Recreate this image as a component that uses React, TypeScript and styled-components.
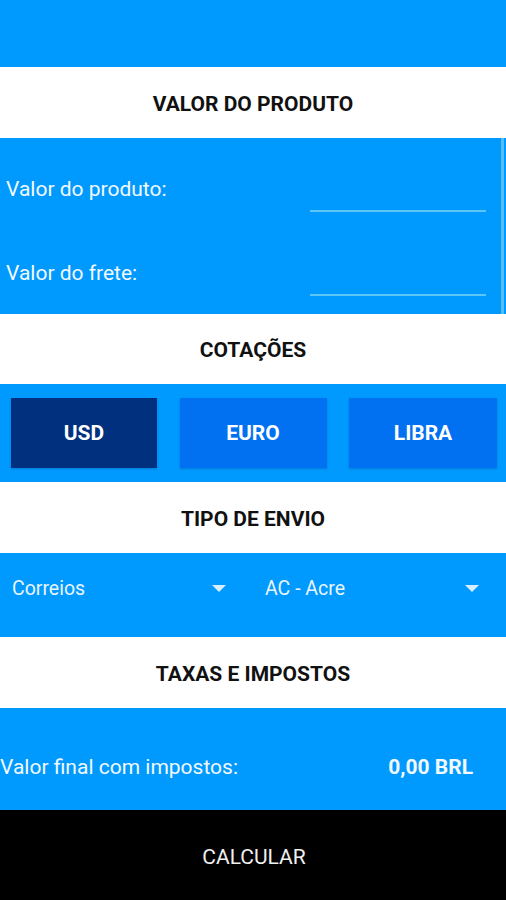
import React from "react";
import styled, { createGlobalStyle } from "styled-components";

const BLUE = "#0099fe";

const Global = createGlobalStyle`
  html, body { margin: 0; padding: 0; background: #ffffff; }
  body { font-family: Roboto, "Liberation Sans", Arial, sans-serif; }
  * { box-sizing: border-box; }
`;

const Screen = styled.div`
  width: 506px;
  height: 900px;
  display: flex;
  flex-direction: column;
  overflow: hidden;
  background: #ffffff;
`;

const TopBar = styled.div`
  height: 67px;
  background: ${BLUE};
  flex: none;
`;

const SectionHeader = styled.div<{ $h?: number }>`
  height: ${(p) => p.$h ?? 71}px;
  flex: none;
  background: #ffffff;
  display: flex;
  align-items: center;
  justify-content: center;
  padding-top: 2px;
`;

const SectionTitle = styled.h2`
  margin: 0;
  font-family: Roboto, "Liberation Sans", Arial, sans-serif;
  font-weight: 700;
  font-size: 21px;
  line-height: 24px;
  color: #111111;
  letter-spacing: 0;
`;

const Panel = styled.div<{ $h: number }>`
  position: relative;
  height: ${(p) => p.$h}px;
  flex: none;
  background: ${BLUE};
`;

const ProductPanel = styled(Panel)`
  padding: 4px 20px 4px 6px;
  display: flex;
  flex-direction: column;
`;

const FieldRow = styled.div`
  height: 84px;
  display: flex;
  align-items: flex-end;
  justify-content: space-between;
  padding-bottom: 14px;
`;

const FieldLabel = styled.label`
  font-size: 21px;
  line-height: 24px;
  color: #f2f9ff;
  margin-bottom: 11px;
`;

const FieldInput = styled.input`
  width: 176px;
  height: 36px;
  border: none;
  border-bottom: 2px solid #5cc6f4;
  background: transparent;
  outline: none;
  color: #ffffff;
  font-size: 20px;
  font-family: inherit;
  padding: 0 4px;
`;

const ScrollThumb = styled.div`
  position: absolute;
  top: 0;
  bottom: 0;
  right: 2px;
  width: 3px;
  background: #56bdf6;
`;

const CurrencyPanel = styled(Panel)`
  display: grid;
  grid-template-columns: 146px 147px 148px;
  column-gap: 0;
  justify-content: space-between;
  padding: 14px 9px 14px 11px;
`;

const CurrencyButton = styled.button<{ $active?: boolean }>`
  height: 70px;
  border: none;
  border-radius: 0;
  background: ${(p) => (p.$active ? "#01307f" : "#0171f2")};
  color: #ffffff;
  font-family: Roboto, "Liberation Sans", Arial, sans-serif;
  font-weight: 700;
  font-size: 21px;
  letter-spacing: 0;
  cursor: pointer;
  box-shadow: 0 1px 2px rgba(0, 40, 100, 0.25);
`;

const SelectPanel = styled(Panel)`
  display: grid;
  grid-template-columns: 253px 253px;
  align-items: start;
  padding-top: 24px;
`;

const SelectBox = styled.div`
  height: 24px;
  display: flex;
  align-items: center;
  justify-content: space-between;
  padding: 0 27px 0 12px;
`;

const SelectText = styled.span`
  font-size: 19.5px;
  line-height: 24px;
  color: #e9f5ff;
`;

const Caret = styled.span`
  width: 0;
  height: 0;
  border-left: 7px solid transparent;
  border-right: 7px solid transparent;
  border-top: 7px solid #d6eeff;
  margin-top: -2px;
`;

const ResultPanel = styled(Panel)`
  display: flex;
  align-items: flex-start;
  justify-content: space-between;
  padding: 47px 33px 0 0;
`;

const ResultLabel = styled.span`
  font-size: 21px;
  line-height: 24px;
  color: #f2f9ff;
`;

const ResultValue = styled.span`
  font-size: 21px;
  line-height: 24px;
  font-weight: 700;
  color: #f2f9ff;
`;

const CalcButton = styled.button`
  flex: 1;
  width: 100%;
  border: none;
  background: #000000;
  color: #f0f0f0;
  font-family: Roboto, "Liberation Sans", Arial, sans-serif;
  font-size: 21px;
  font-weight: 400;
  padding: 3px 0 0 2px;
  cursor: pointer;
`;

function Select({ value }: { value: string }) {
  return (
    <SelectBox>
      <SelectText>{value}</SelectText>
      <Caret />
    </SelectBox>
  );
}

export default function App() {
  return (
    <Screen>
      <Global />
      <TopBar />
      <SectionHeader>
        <SectionTitle>VALOR DO PRODUTO</SectionTitle>
      </SectionHeader>
      <ProductPanel $h={176}>
        <FieldRow>
          <FieldLabel>Valor do produto:</FieldLabel>
          <FieldInput />
        </FieldRow>
        <FieldRow>
          <FieldLabel>Valor do frete:</FieldLabel>
          <FieldInput />
        </FieldRow>
        <ScrollThumb />
      </ProductPanel>
      <SectionHeader $h={70}>
        <SectionTitle>COTAÇÕES</SectionTitle>
      </SectionHeader>
      <CurrencyPanel $h={98}>
        <CurrencyButton $active>USD</CurrencyButton>
        <CurrencyButton>EURO</CurrencyButton>
        <CurrencyButton>LIBRA</CurrencyButton>
      </CurrencyPanel>
      <SectionHeader>
        <SectionTitle>TIPO DE ENVIO</SectionTitle>
      </SectionHeader>
      <SelectPanel $h={84}>
        <Select value="Correios" />
        <Select value="AC - Acre" />
      </SelectPanel>
      <SectionHeader>
        <SectionTitle>TAXAS E IMPOSTOS</SectionTitle>
      </SectionHeader>
      <ResultPanel $h={102}>
        <ResultLabel>Valor final com impostos:</ResultLabel>
        <ResultValue>0,00 BRL</ResultValue>
      </ResultPanel>
      <CalcButton>CALCULAR</CalcButton>
    </Screen>
  );
}
